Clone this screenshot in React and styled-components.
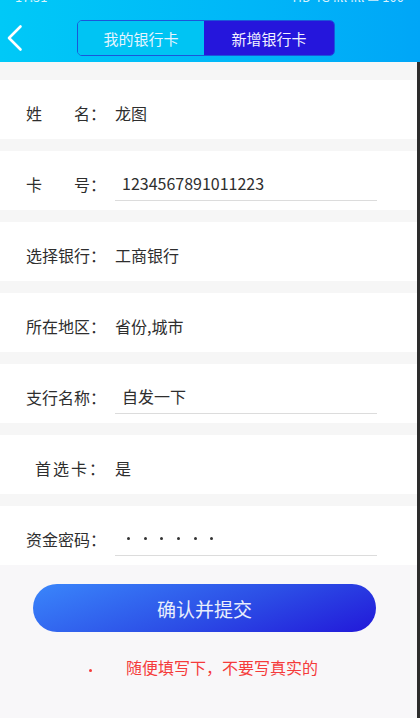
import React from "react";
import styled, { createGlobalStyle } from "styled-components";

const GlobalStyle = createGlobalStyle`
  body {
    margin: 0;
    background: #f8f7f9;
    font-family: "Noto Sans CJK SC", "Noto Sans", sans-serif;
  }
`;

const Page = styled.div`
  width: 420px;
  min-height: 718px;
  display: flex;
  flex-direction: column;
`;

const Header = styled.div`
  height: 62px;
  box-sizing: border-box;
  background: linear-gradient(90deg, #00c9f7 0%, #00b6f8 60%, #00a6f7 100%);
  padding-bottom: 6px;
`;

const StatusBar = styled.div`
  height: 3px;
  overflow: hidden;
  display: flex;
  justify-content: space-between;
  padding: 0 16px 0 15px;
  margin-bottom: 17px;
  color: rgba(255, 255, 255, 0.85);
  font-size: 13px;
  line-height: 13px;

  span {
    display: block;
    margin-top: -10px;
  }
`;

const NavRow = styled.div`
  height: 36px;
  display: flex;
  align-items: center;
  padding-left: 7px;
`;

const BackButton = styled.button`
  border: none;
  background: none;
  padding: 0;
  width: 16px;
  height: 28px;
  display: flex;
  align-items: center;
  cursor: pointer;
`;

const Tabs = styled.div`
  margin-left: 54px;
  width: 258px;
  height: 36px;
  box-sizing: border-box;
  display: flex;
  border: 1.5px solid #1b56d9;
  border-radius: 5px;
  overflow: hidden;
`;

const Tab = styled.div`
  flex: ${(p) => (p.active ? "0 0 130px" : "1")};
  display: flex;
  align-items: center;
  justify-content: center;
  font-size: 15px;
  color: ${(p) => (p.active ? "#f2f2ff" : "#e6f4ff")};
  background: ${(p) => (p.active ? "#2516dc" : "#00c4f3")};
`;

const Body = styled.div`
  flex: 1;
  border-right: 3px solid #2c2c2c;
  background: #f6f6f6;
  display: flex;
  flex-direction: column;
`;

const Form = styled.div`
  display: flex;
  flex-direction: column;
  gap: 12px;
  padding-top: 18px;
`;

const Row = styled.div`
  height: 59px;
  box-sizing: border-box;
  padding: 6px 0 0 26px;
  background: #ffffff;
  display: flex;
  align-items: center;
  font-size: 16px;
  color: #2e2e2e;
`;

const Label = styled.div`
  width: 89px;
  flex-shrink: 0;
  display: flex;
  padding-left: ${(p) => p.indent || 0}px;
  letter-spacing: ${(p) => p.spacing || 0}px;
  box-sizing: border-box;
`;

const Justified = styled.span`
  width: 64px;
  display: flex;
  justify-content: space-between;
`;

const Value = styled.div`
  color: #2e2e2e;
`;

const Field = styled.input`
  width: 262px;
  height: 34px;
  box-sizing: border-box;
  border: none;
  border-bottom: 1.5px solid #dcdcdc;
  outline: none;
  padding: 0 0 0 7px;
  font-family: inherit;
  font-size: 16px;
  color: #2e2e2e;
  background: transparent;
`;

const DotField = styled.div`
  width: 262px;
  height: 34px;
  box-sizing: border-box;
  border-bottom: 1.5px solid #dcdcdc;
  padding-left: 12px;
  display: flex;
  align-items: center;
  gap: 13.7px;
`;

const Dot = styled.span`
  width: 3px;
  height: 3px;
  border-radius: 50%;
  background: #333333;
`;

const Footer = styled.div`
  flex: 1;
  background: #f8f7f9;
  padding: 19px 0 0 33px;
`;

const SubmitButton = styled.button`
  width: 343px;
  height: 48px;
  border: none;
  border-radius: 24px;
  background: linear-gradient(160deg, #3a86fb 0%, #2c4ee6 55%, #2218d9 100%);
  color: #e9eefc;
  font-family: inherit;
  font-size: 19px;
  cursor: pointer;
`;

const Note = styled.div`
  margin-top: 23px;
  padding-left: 56px;
  display: flex;
  align-items: center;
  color: #f53b3b;
  font-size: 16px;
`;

const NoteDot = styled.span`
  width: 3px;
  height: 3px;
  border-radius: 50%;
  background: #f53b3b;
  margin: 6px 34px 0 0;
`;

const ChevronLeft = () => (
  <svg width="16" height="28" viewBox="0 0 16 28">
    <polyline
      points="13.5,2.5 2,14 13.5,25.5"
      fill="none"
      stroke="#ffffff"
      strokeWidth="2.6"
      strokeLinecap="round"
      strokeLinejoin="round"
    />
  </svg>
);

const App = () => {
  return (
    <>
      <GlobalStyle />
      <Page>
        <Header>
          <StatusBar>
            <span>17:51</span>
            <span>HD 4G .ıll .ıll ▭ 100</span>
          </StatusBar>
          <NavRow>
            <BackButton aria-label="返回">
              <ChevronLeft />
            </BackButton>
            <Tabs>
              <Tab>我的银行卡</Tab>
              <Tab active>新增银行卡</Tab>
            </Tabs>
          </NavRow>
        </Header>
        <Body>
          <Form>
            <Row>
              <Label>
                <Justified>
                  <span>姓</span>
                  <span>名</span>
                </Justified>
                ：
              </Label>
              <Value>龙图</Value>
            </Row>
            <Row>
              <Label>
                <Justified>
                  <span>卡</span>
                  <span>号</span>
                </Justified>
                ：
              </Label>
              <Field defaultValue="1234567891011223" />
            </Row>
            <Row>
              <Label>选择银行：</Label>
              <Value>工商银行</Value>
            </Row>
            <Row>
              <Label>所在地区：</Label>
              <Value>省份,城市</Value>
            </Row>
            <Row>
              <Label>支行名称：</Label>
              <Field defaultValue="自发一下" />
            </Row>
            <Row>
              <Label indent={9} spacing={2}>
                首选卡：
              </Label>
              <Value>是</Value>
            </Row>
            <Row>
              <Label>资金密码：</Label>
              <DotField>
                {[0, 1, 2, 3, 4, 5].map((i) => (
                  <Dot key={i} />
                ))}
              </DotField>
            </Row>
          </Form>
          <Footer>
            <SubmitButton>确认并提交</SubmitButton>
            <Note>
              <NoteDot />
              随便填写下，不要写真实的
            </Note>
          </Footer>
        </Body>
      </Page>
    </>
  );
};

export default App;
